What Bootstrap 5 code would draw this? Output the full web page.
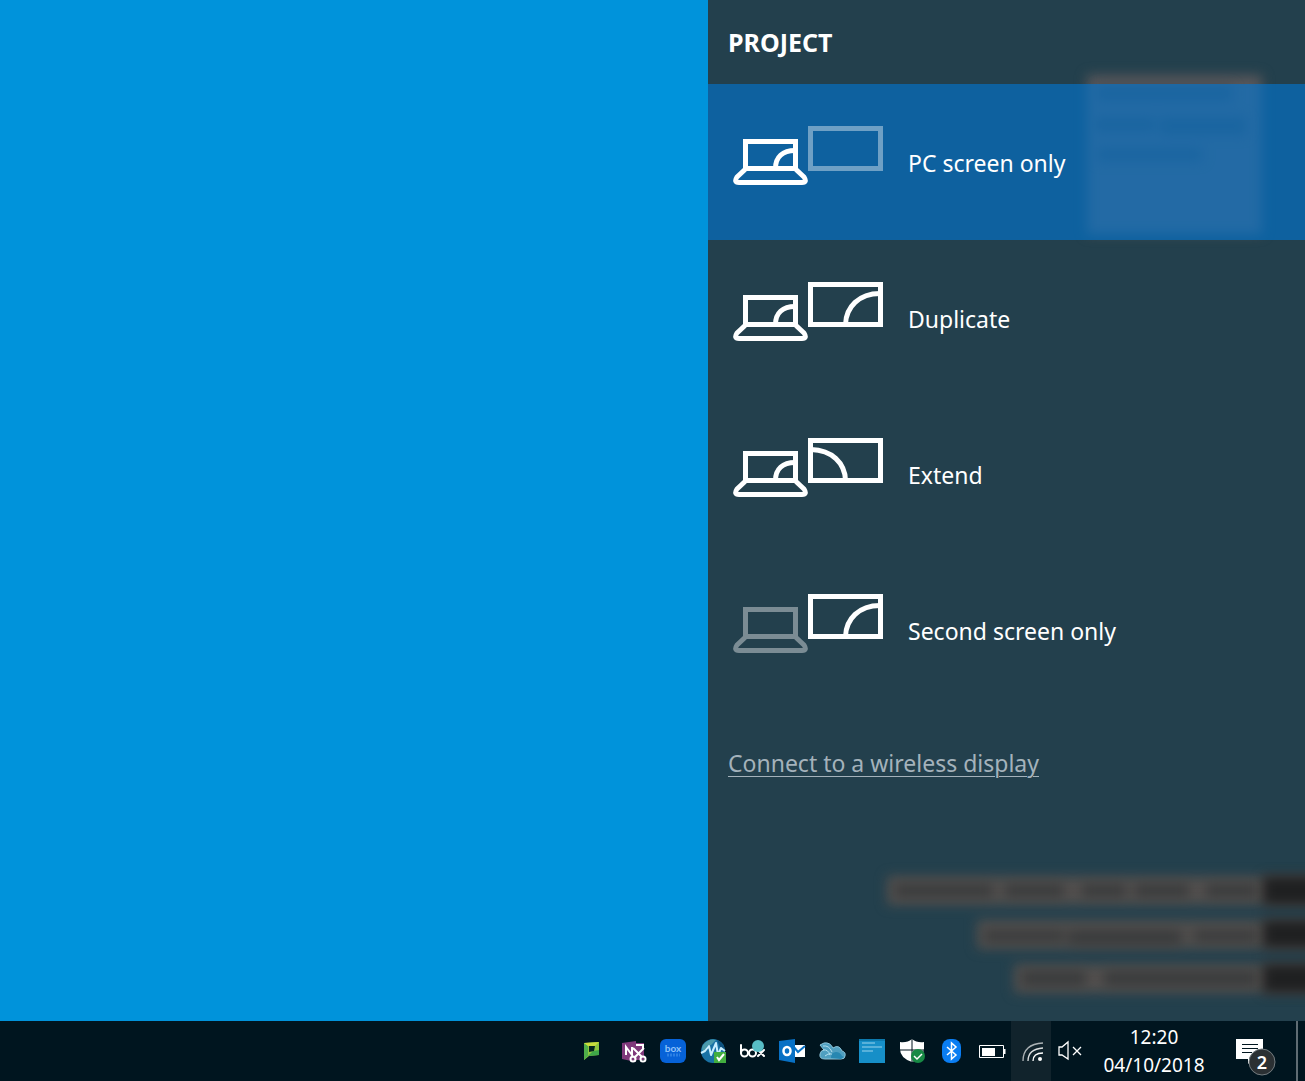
<!DOCTYPE html>
<html lang="en">
<head>
<meta charset="utf-8">
<meta name="viewport" content="width=device-width, initial-scale=1">
<title>Project</title>
<link href="https://cdn.jsdelivr.net/npm/bootstrap@5.3.0/dist/css/bootstrap.min.css" rel="stylesheet">
<style>
  body { font-family: "Noto Sans", "Open Sans", sans-serif; background: #0093db; color: #fff; }
  .flyout { width: 597px; background: #23404d; }
  .flyout-head { height: 84px; padding: 0 20px; }
  .flyout-title { font-size: 25px; line-height: 32px; }
  .mode { height: 156px; padding: 0 25px; gap: 25px; font-size: 23px; line-height: 32px; color: #fff; background: transparent; }
  .mode span { padding-top: 2px; }
  .mode-active { background: rgba(0, 120, 215, .6); }
  .mode:focus-visible { outline: 2px solid #fff; outline-offset: -4px; }
  .wireless { margin: 39px 20px 0; font-size: 23px; line-height: 32px; color: #a4b2bb; text-underline-offset: 4px; text-decoration-thickness: 1px; }
  .wireless:hover { color: #fff; }
  .taskbar { height: 60px; background: #00151f; }
  .tray-btn { width: 40px; height: 60px; background: transparent; }
  .tray-hot { background: #11232c; }
  .clock { width: 126px; font-size: 19px; line-height: 28px; color: #fff; background: transparent; }
  .notes { width: 79px; background: transparent; }
  .peek { width: 9px; background: transparent; border-left: 2px solid #5f6c73 !important; }
  svg { display: block; }
  .line-art { fill: none; stroke: #fff; stroke-width: 5; }
</style>
<script src="https://cdn.jsdelivr.net/npm/bootstrap@5.3.0/dist/js/bootstrap.bundle.min.js"></script>
</head>
<body>
<svg width="0" height="0" class="position-absolute" aria-hidden="true">
  <defs>
    <g id="laptop">
      <rect x="12.5" y="15.5" width="50" height="27"/>
      <path d="M12 43.5L4 51Q0.5 56.5 6 56.5H69Q74.5 56.5 71 51L63 43.5" stroke-linejoin="round"/>
    </g>
    <path id="laptop-arc" d="M42.5 42.5C42.5 31 50 24.5 62 24.5"/>
    <rect id="monitor" x="77.5" y="2.5" width="70" height="40"/>
    <path id="monitor-arc" d="M112.5 42.5C113 25 126 11.5 147 11.5"/>
  </defs>
</svg>

<div class="vh-100 d-flex flex-column overflow-hidden">
  <main class="flex-grow-1 d-flex justify-content-end">
    <section class="flyout position-relative d-flex flex-column overflow-hidden" aria-labelledby="title">
      <!-- wallpaper showing through the translucent panel -->
      <svg class="position-absolute top-0 end-0" width="597" height="1021" viewBox="0 0 597 1021" aria-hidden="true">
        <defs>
          <filter id="haze" x="-20%" y="-80%" width="140%" height="260%" color-interpolation-filters="sRGB"><feGaussianBlur stdDeviation="6"/></filter>
        </defs>
        <rect x="379" y="75" width="175" height="159" fill="#57565a" filter="url(#haze)"/>
        <g fill="#414950" filter="url(#haze)">
          <rect x="389" y="86" width="135" height="15"/><rect x="387" y="117" width="60" height="15"/><rect x="452" y="117" width="86" height="18"/><rect x="389" y="148" width="105" height="13"/>
        </g>
        <g fill="#524f4e" filter="url(#haze)">
          <rect x="179" y="876" width="430" height="29"/><rect x="269" y="920" width="340" height="29"/><rect x="306" y="964" width="300" height="29"/>
        </g>
        <g fill="#393b3c" filter="url(#haze)">
          <rect x="187" y="884" width="98" height="13"/><rect x="297" y="884" width="59" height="13"/><rect x="374" y="884" width="44" height="13"/><rect x="427" y="884" width="54" height="13"/><rect x="498" y="884" width="50" height="13"/>
          <rect x="276" y="930" width="80" height="12"/><rect x="360" y="930" width="114" height="15"/><rect x="486" y="930" width="62" height="12"/>
          <rect x="314" y="971" width="64" height="15"/><rect x="396" y="971" width="152" height="15"/>
        </g>
        <g fill="#1f2021" filter="url(#haze)">
          <rect x="555" y="876" width="80" height="29"/><rect x="555" y="920" width="80" height="28"/><rect x="555" y="964" width="80" height="29"/>
        </g>
      </svg>
      <header class="flyout-head position-relative d-flex align-items-center">
        <h1 id="title" class="flyout-title fw-bold m-0">PROJECT</h1>
      </header>
      <button type="button" class="mode mode-active position-relative border-0 d-flex align-items-center text-start">
        <svg class="line-art" width="150" height="72" viewBox="0 0 150 72" aria-hidden="true"><use href="#laptop"/><use href="#laptop-arc"/><use href="#monitor" opacity=".4"/></svg>
        <span>PC screen only</span>
      </button>
      <button type="button" class="mode position-relative border-0 d-flex align-items-center text-start">
        <svg class="line-art" width="150" height="72" viewBox="0 0 150 72" aria-hidden="true"><use href="#laptop"/><use href="#laptop-arc"/><use href="#monitor"/><use href="#monitor-arc"/></svg>
        <span>Duplicate</span>
      </button>
      <button type="button" class="mode position-relative border-0 d-flex align-items-center text-start">
        <svg class="line-art" width="150" height="72" viewBox="0 0 150 72" aria-hidden="true"><use href="#laptop"/><use href="#laptop-arc"/><use href="#monitor"/><path d="M78 11.5C99 12 112 25 112.5 42.5"/></svg>
        <span>Extend</span>
      </button>
      <button type="button" class="mode position-relative border-0 d-flex align-items-center text-start">
        <svg class="line-art" width="150" height="72" viewBox="0 0 150 72" aria-hidden="true"><use href="#laptop" opacity=".4"/><use href="#monitor"/><use href="#monitor-arc"/></svg>
        <span>Second screen only</span>
      </button>
      <a href="#" class="wireless position-relative align-self-start">Connect to a wireless display</a>
    </section>
  </main>

  <footer class="taskbar d-flex justify-content-end flex-shrink-0">
    <button type="button" class="tray-btn border-0 p-0" aria-label="PaperCut">
      <svg width="40" height="60" viewBox="0 0 40 60"><path d="M13 22L28 21V34L18 35L13 39Z" fill="#8dc63f"/><path d="M13 22L17 25V35L13 39Z" fill="#4fae49"/><path d="M17 35L22 30L28 29V34Z" fill="#3fa648"/><path d="M13 22L28 21L24 25H17Z" fill="#c9dc3c"/><path d="M18 25H24L23 30L18 31Z" fill="#06261f"/></svg>
    </button>
    <button type="button" class="tray-btn border-0 p-0" aria-label="OneNote clipping">
      <svg width="40" height="60" viewBox="0 0 40 60"><path d="M24 22H33V39H24Z" fill="#80397b"/><path d="M11 22L25 20V41L11 38Z" fill="#80397b"/><path d="M15 34V26L21 34V26" fill="none" stroke="#fff" stroke-width="2"/><g fill="none" stroke="#fff" stroke-width="2"><path d="M23 37L33 27M31 36L22 27M25 24H32V28"/><circle cx="22" cy="38" r="2.5"/><circle cx="32" cy="38" r="2.5"/></g></svg>
    </button>
    <button type="button" class="tray-btn border-0 p-0" aria-label="Box">
      <svg width="40" height="60" viewBox="0 0 40 60"><rect x="9" y="18" width="26" height="24" rx="6" fill="#0662d8"/><text x="22" y="31" text-anchor="middle" font-family="Lato, sans-serif" font-weight="700" font-size="10" fill="#8fc2fa">box</text><path d="M16 34H29" stroke="#4594ed" stroke-width="3" stroke-dasharray="2 1" opacity=".6"/></svg>
    </button>
    <button type="button" class="tray-btn border-0 p-0" aria-label="System monitor">
      <svg width="40" height="60" viewBox="0 0 40 60"><circle cx="22" cy="30" r="12" fill="#1972a5"/><path d="M12 24Q18 17 25 19L20 24L16 25L14 31Q9 29 12 24Z" fill="#4b9aab"/><path d="M26 19Q33 22 34 29L29 26Z" fill="#0d517e"/><path d="M10 32L14 30L18 25L20 34L25 22L27 34L30 27L34 30" fill="none" stroke="#c9efff" stroke-width="2" stroke-linejoin="round"/><rect x="23" y="31" width="12" height="11" fill="#42ae3f"/><path d="M26 36L28 39L33 33" fill="none" stroke="#fff" stroke-width="2"/></svg>
    </button>
    <button type="button" class="tray-btn border-0 p-0" aria-label="Box Drive">
      <svg width="40" height="60" viewBox="0 0 40 60"><g fill="none" stroke="#fff" stroke-width="2" stroke-linecap="round"><path d="M10 24V32"/><circle cx="13.5" cy="32" r="3.5"/><circle cx="21.5" cy="32" r="3.5"/><path d="M27 29L33 35M33 29L27 35"/></g><circle cx="27" cy="25" r="6" fill="#58bdc6"/></svg>
    </button>
    <button type="button" class="tray-btn border-0 p-0" aria-label="Outlook">
      <svg width="40" height="60" viewBox="0 0 40 60"><path d="M21 24H34V36H21Z" fill="#fff"/><path d="M22 25L27 31L34 25" fill="none" stroke="#0871c5" stroke-width="2"/><path d="M8 20L24 18V42L8 39Z" fill="#0871c5"/><ellipse cx="16" cy="30" rx="3.5" ry="4" fill="none" stroke="#fff" stroke-width="2.5"/></svg>
    </button>
    <button type="button" class="tray-btn border-0 p-0" aria-label="Cloud sync">
      <svg width="40" height="60" viewBox="0 0 40 60"><path d="M14 38Q8 38 9 33Q10 29 13 29L9 24L13 22Q19 21 22 27Q28 23 31 30Q35 31 34 35Q34 38 30 38Z" fill="#4f9fc0" stroke="#8cc3d8" stroke-width="1"/><path d="M12 25Q18 24 21 31M12 29Q17 28 19 34M14 35Q20 30 24 36" fill="none" stroke="#b4dfee" stroke-width="1"/><path d="M20 37Q20 31 25 31Q29 31 31 35L33 36L30 38Z" fill="#2787b1"/></svg>
    </button>
    <button type="button" class="tray-btn border-0 p-0" aria-label="Desktop information">
      <svg width="40" height="60" viewBox="0 0 40 60"><rect x="8" y="18" width="26" height="24" fill="#168fc8"/><path d="M8 18H34V20H8Z" fill="#0c79ad"/><path d="M11 22H24M11 26H31M11 30H22" stroke="#57b1da" stroke-width="2"/></svg>
    </button>
    <button type="button" class="tray-btn border-0 p-0" aria-label="Security">
      <svg width="40" height="60" viewBox="0 0 40 60"><path d="M21 18Q26 22 33 21V28Q32 37 21 41Q9 37 9 28V21Q16 22 21 18Z" fill="#fff"/><path d="M21 18V41M9 29H33" stroke="#00151f" stroke-width="1"/><circle cx="27" cy="35" r="7" fill="#188a45"/><path d="M23 35L26 38L31 33" fill="none" stroke="#fff" stroke-width="1.5"/></svg>
    </button>
    <button type="button" class="tray-btn border-0 p-0" aria-label="Bluetooth">
      <svg width="40" height="60" viewBox="0 0 40 60"><rect x="11" y="18" width="19" height="24" rx="8" fill="#0a7df2"/><path d="M16 26L25 34L20.5 38V22L25 26L16 34" fill="none" stroke="#fff" stroke-width="1.5"/></svg>
    </button>
    <button type="button" class="tray-btn border-0 p-0" aria-label="Battery">
      <svg width="40" height="60" viewBox="0 0 40 60"><path d="M8.5 24.5H32.5V36.5H8.5Z" fill="none" stroke="#fff"/><path d="M33 28H34.5V33H33M11 27H24V35H11Z" fill="#fff"/></svg>
    </button>
    <button type="button" class="tray-btn tray-hot border-0 p-0" aria-label="Wi-Fi">
      <svg width="40" height="60" viewBox="0 0 40 60"><g fill="none" stroke="#fff" stroke-width="1.3"><path d="M12 40Q12 23 32 22" opacity=".65"/><path d="M17 40Q17 28 32 27" opacity=".85"/><path d="M22 40Q22 32 32 32"/></g><circle cx="29" cy="38" r="2" fill="#fff"/></svg>
    </button>
    <button type="button" class="tray-btn border-0 p-0" aria-label="Volume muted">
      <svg width="40" height="60" viewBox="0 0 40 60"><path d="M8 26H11L17 21V38L11 34H8ZM22 26L30 34M30 26L22 34" fill="none" stroke="#fff" stroke-width="1.3"/></svg>
    </button>
    <button type="button" class="clock border-0 p-0 d-flex flex-column align-items-center justify-content-center"><span>12:20</span><span>04/10/2018</span></button>
    <button type="button" class="notes border-0 p-0" aria-label="2 notifications">
      <svg width="79" height="60" viewBox="0 0 79 60"><path d="M19 18H46V38H36L31 43V38H19Z" fill="#fff"/><path d="M25 23.5H41M25 27.5H41M25 31.5H35" stroke="#00151f" stroke-width="1"/><circle cx="45" cy="41" r="13" fill="#2b3033" stroke="#737b7f"/><text x="45" y="48" text-anchor="middle" font-family="Noto Sans, sans-serif" font-weight="600" font-size="18" fill="#fff">2</text></svg>
    </button>
    <button type="button" class="peek border-0 p-0" aria-label="Show desktop"></button>
  </footer>
</div>
</body>
</html>
